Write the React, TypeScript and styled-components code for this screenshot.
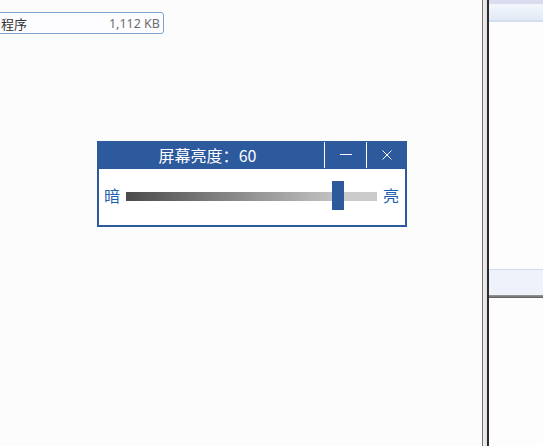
import React from 'react';
import styled, { createGlobalStyle } from 'styled-components';

const GlobalStyle = createGlobalStyle`
	html, body {
		margin: 0;
		padding: 0;
		background: #fcfcfc;
		overflow: hidden;
	}
	#root {
		width: 543px;
		height: 446px;
	}
`;

const Page = styled.div`
	display: flex;
	width: 543px;
	height: 446px;
	overflow: hidden;
`;

const LeftPane = styled.div`
	display: flex;
	flex-direction: column;
	width: 482px;
	flex-shrink: 0;
	background: #fcfcfc;
`;

const FileRow = styled.div`
	display: flex;
	justify-content: space-between;
	align-items: center;
	box-sizing: border-box;
	width: 184px;
	height: 22px;
	margin: 12px 0 0 -20px;
	padding: 0 3px 0 20px;
	border: 1px solid #7da2ce;
	border-radius: 3px;
	background: #fdfdff;
	font-family: "Noto Sans", "Noto Sans CJK SC", sans-serif;
	font-size: 12.5px;
`;

const FileName = styled.span`
	color: #333;
	font-size: 13px;
`;

const FileSize = styled.span`
	color: #6d6d6d;
`;

const Dialog = styled.div`
	display: flex;
	flex-direction: column;
	box-sizing: border-box;
	width: 310px;
	height: 86px;
	margin: 107px 0 0 97px;
	border: 2px solid #2c5a9c;
	border-top: none;
	background: #fff;
	font-family: "Noto Sans CJK SC", "Noto Sans", sans-serif;
`;

const TitleBar = styled.div`
	display: flex;
	height: 28px;
	margin: 0 -2px;
	background: #2c5a9c;
	color: #fff;
`;

const Title = styled.div`
	flex: 1;
	display: flex;
	align-items: center;
	justify-content: center;
	padding-right: 6px;
	font-size: 16px;
`;

const TitleButton = styled.div<{ $w: number }>`
	display: flex;
	align-items: center;
	justify-content: center;
	width: ${p => p.$w}px;
	border-left: 1px solid #fff;
	margin: 1px 0;
`;

const Body = styled.div`
	flex: 1;
	display: flex;
	align-items: center;
	gap: 6px;
	padding: 0 6px 2px 5px;
`;

const Label = styled.span`
	color: #1d5fb0;
	font-size: 16px;
	line-height: 16px;
	margin-top: -2px;
`;

const Track = styled.div`
	position: relative;
	flex: 1;
	height: 9px;
	background: #cbcbcb;
`;

const Filled = styled.div`
	height: 100%;
	background: linear-gradient(to right, #4b4b4b, #c4c4c4);
`;

const Thumb = styled.div`
	position: absolute;
	top: -11px;
	width: 12px;
	height: 29px;
	margin-left: -6px;
	background: #2c5a9c;
`;

const Splitter = styled.div`
	width: 7px;
	flex-shrink: 0;
	box-sizing: border-box;
	border-left: 1px solid #6f6f6f;
	border-right: 2px solid #2a2a2a;
	background: linear-gradient(to right, #f2eeef, #e2dcde);
`;

const RightPane = styled.div`
	flex: 1;
	display: flex;
	flex-direction: column;
	background: #fdfdfd;
`;

const HeaderBand = styled.div`
	height: 16px;
	border-top: 4px solid #d8dcee;
	border-bottom: 2px solid #d3e0f0;
	background: linear-gradient(to bottom, #f3f6fc, #e2eaf6);
`;

const SelectedBand = styled.div`
	height: 25px;
	margin-top: 247px;
	border-top: 1px solid #cfdcec;
	background: #eef2fb;
`;

const DividerBar = styled.div`
	height: 3px;
	background: linear-gradient(to bottom, #9a9a9a, #5e5e5e);
`;

export default function App() {
	const value = 60;
	const pct = 84.5;
	return (
		<>
			<GlobalStyle />
			<Page>
				<LeftPane>
					<FileRow>
						<FileName>程序</FileName>
						<FileSize>1,112 KB</FileSize>
					</FileRow>
					<Dialog>
						<TitleBar>
							<Title>屏幕亮度：{value}</Title>
							<TitleButton $w={41}>
								<svg width="12" height="2" viewBox="0 0 12 2">
									<rect x="0" y="0" width="12" height="1" fill="#fff" />
								</svg>
							</TitleButton>
							<TitleButton $w={40}>
								<svg width="10" height="10" viewBox="0 0 10 10">
									<path d="M0.5 0.5 L9.5 9.5 M9.5 0.5 L0.5 9.5" stroke="#fff" strokeWidth="1" />
								</svg>
							</TitleButton>
						</TitleBar>
						<Body>
							<Label>暗</Label>
							<Track>
								<Filled style={{ width: `${pct}%` }} />
								<Thumb style={{ left: `${pct}%` }} />
							</Track>
							<Label>亮</Label>
						</Body>
					</Dialog>
				</LeftPane>
				<Splitter />
				<RightPane>
					<HeaderBand />
					<SelectedBand />
					<DividerBar />
				</RightPane>
			</Page>
		</>
	);
}
